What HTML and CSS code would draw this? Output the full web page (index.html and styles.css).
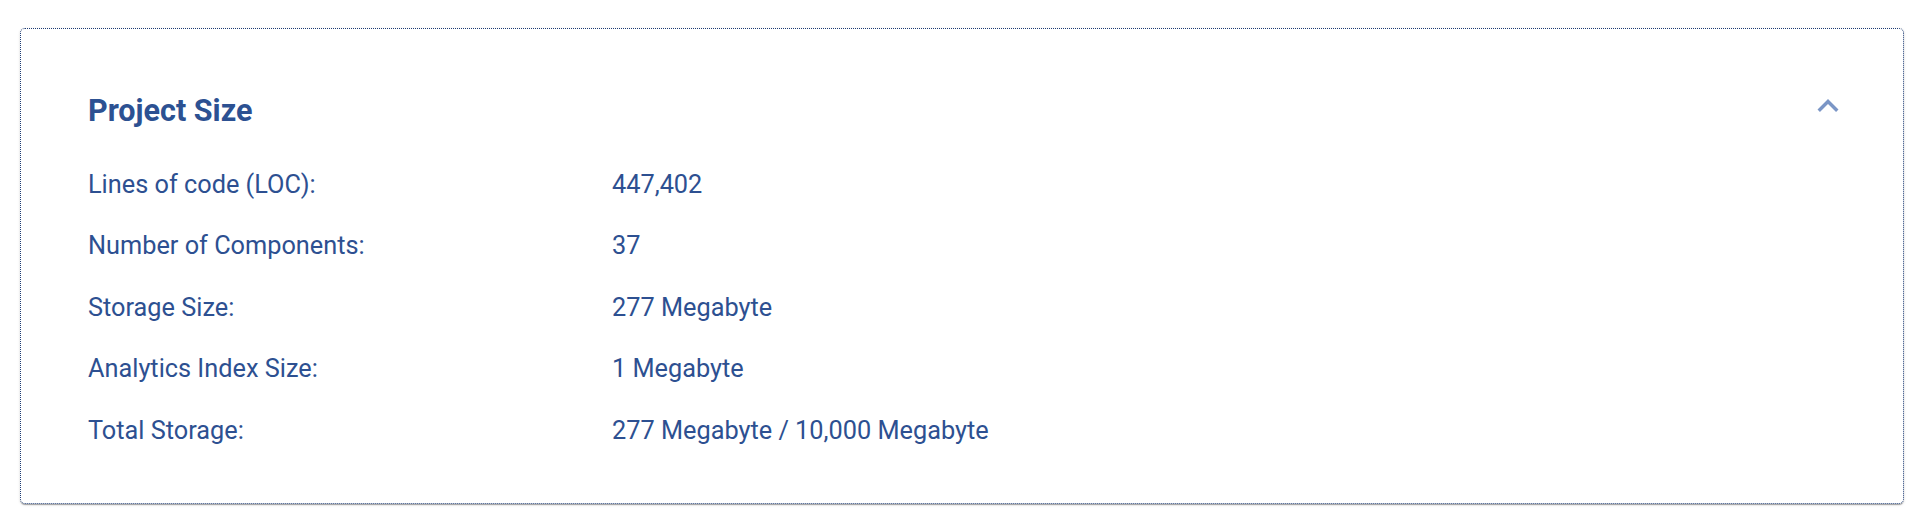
FILE: index.html
```html
<!DOCTYPE html>
<html lang="en">
<head>
<meta charset="utf-8">
<title>Project Size</title>
<link rel="stylesheet" href="styles.css">
</head>
<body>
<div class="page">
  <section class="card">
    <header class="card-header">
      <h2 class="card-title">Project Size</h2>
      <svg class="chevron" viewBox="0 0 24 24" aria-hidden="true"><path d="M12 8l-6 6 1.41 1.41L12 10.83l4.59 4.58L18 14z"/></svg>
    </header>
    <dl class="stats">
      <dt>Lines of code (LOC):</dt><dd>447,402</dd>
      <dt>Number of Components:</dt><dd>37</dd>
      <dt>Storage Size:</dt><dd>277 Megabyte</dd>
      <dt>Analytics Index Size:</dt><dd>1 Megabyte</dd>
      <dt>Total Storage:</dt><dd>277 Megabyte / 10,000 Megabyte</dd>
    </dl>
  </section>
</div>
</body>
</html>
```
FILE: styles.css
```css
html, body {
  margin: 0;
  padding: 0;
  background: #ffffff;
}
body {
  font-family: Roboto, "Liberation Sans", sans-serif;
  color: #2d5091;
}
.page {
  padding: 28px 25px 20px 19.5px;
}
.card {
  border: 1px dotted #1d3b73;
  border-radius: 5px;
  background: #fff;
  box-shadow: 0 2px 1px -1px rgba(0,0,0,.2), 0 1px 1px 0 rgba(0,0,0,.14), 0 1px 3px 0 rgba(0,0,0,.12);
  padding: 64px 54px 57px 67.5px;
}
.card-header {
  display: flex;
  justify-content: space-between;
  align-items: flex-start;
}
.card-title {
  margin: 0;
  font-size: 30.5px;
  line-height: 36px;
  font-weight: 700;
  color: #2c5192;
}
.chevron {
  width: 42px;
  height: 42px;
  margin-top: -8px;
  fill: #7b96c6;
}
.stats {
  margin: 41px 0 0 0;
  display: grid;
  grid-template-columns: 524px 1fr;
  row-gap: 31.4px;
  font-size: 25.3px;
  line-height: 30px;
}
.stats dt, .stats dd {
  margin: 0;
}
```
